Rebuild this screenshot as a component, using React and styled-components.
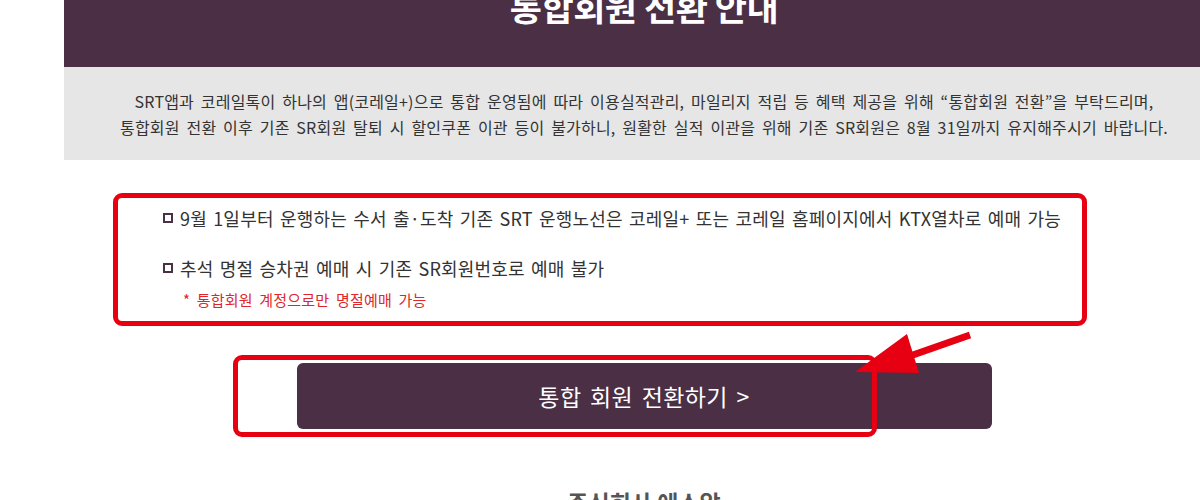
import React from 'react';
import styled, { createGlobalStyle } from 'styled-components';

const GlobalStyle = createGlobalStyle`
  html, body {
    margin: 0;
    padding: 0;
    background: #fff;
    overflow: hidden;
  }
  body {
    font-family: "Noto Sans CJK KR", "Noto Sans", sans-serif;
    color: #333;
  }
`;

const Page = styled.div`
  position: relative;
  width: 1200px;
  height: 500px;
  overflow: hidden;
`;

const Container = styled.div`
  margin-left: 64px;
  width: 1160px;
`;

const Header = styled.div`
  height: 67px;
  background: #4a2f45;
  display: flex;
  justify-content: center;
  overflow: hidden;
`;

const Title = styled.h1`
  margin: -13px 0 0;
  font-size: 35px;
  line-height: 38px;
  font-weight: 700;
  color: #fff;
  letter-spacing: -0.5px;
`;

const Intro = styled.div`
  background: #e6e6e6;
  height: 93px;
  display: flex;
  flex-direction: column;
  justify-content: center;
  align-items: center;
  font-size: 16px;
  line-height: 26px;
  letter-spacing: 0.2px;
  word-spacing: 3px;
  color: #333;
  text-align: center;
`;

const Notice = styled.ul`
  list-style: none;
  margin: 0;
  padding: 45px 0 0 99px;
`;

const Item = styled.li`
  display: flex;
  align-items: center;
  gap: 7px;
  font-size: 18px;
  line-height: 26px;
  letter-spacing: 0.2px;
  word-spacing: 2px;
  color: #333;
  & + & {
    margin-top: 24px;
  }
`;

const Square = styled.span`
  width: 10px;
  height: 10px;
  box-sizing: border-box;
  border: 2px solid #4a2f45;
  flex-shrink: 0;
`;

const Note = styled.p`
  margin: 8px 0 0 119px;
  font-size: 15px;
  line-height: 22px;
  letter-spacing: 0.2px;
  word-spacing: 3px;
  color: #e0262d;
`;

const ButtonRow = styled.div`
  display: flex;
  justify-content: center;
  margin-top: 52px;
`;

const ConvertButton = styled.button`
  width: 695px;
  height: 66px;
  border: 0;
  border-radius: 6px;
  background: #4a2f45;
  color: #fff;
  font-family: inherit;
  font-size: 23px;
  letter-spacing: 0.4px;
  word-spacing: 3px;
  cursor: pointer;
`;

const Company = styled.div`
  margin-top: 57px;
  text-align: center;
  font-size: 23px;
  font-weight: 700;
  line-height: 32px;
  color: #555;
`;

const Mark = styled.div`
  position: absolute;
  left: ${(p) => p.$x}px;
  top: ${(p) => p.$y}px;
  width: ${(p) => p.$w}px;
  height: ${(p) => p.$h}px;
  box-sizing: border-box;
  border: 5px solid #e60012;
  border-radius: 9px;
  pointer-events: none;
`;

const Arrow = styled.svg`
  position: absolute;
  left: 840px;
  top: 320px;
  pointer-events: none;
`;

export default function App() {
  return (
    <Page>
      <GlobalStyle />
      <Container>
        <Header>
          <Title>통합회원 전환 안내</Title>
        </Header>
        <Intro>
          <div>SRT앱과 코레일톡이 하나의 앱(코레일+)으로 통합 운영됨에 따라 이용실적관리, 마일리지 적립 등 혜택 제공을 위해 “통합회원 전환”을 부탁드리며,</div>
          <div>통합회원 전환 이후 기존 SR회원 탈퇴 시 할인쿠폰 이관 등이 불가하니, 원활한 실적 이관을 위해 기존 SR회원은 8월 31일까지 유지해주시기 바랍니다.</div>
        </Intro>
        <Notice>
          <Item><Square />9월 1일부터 운행하는 수서 출·도착 기존 SRT 운행노선은 코레일+ 또는 코레일 홈페이지에서 KTX열차로 예매 가능</Item>
          <Item><Square />추석 명절 승차권 예매 시 기존 SR회원번호로 예매 불가</Item>
        </Notice>
        <Note>* 통합회원 계정으로만 명절예매 가능</Note>
        <ButtonRow>
          <ConvertButton>통합 회원 전환하기 &gt;</ConvertButton>
        </ButtonRow>
        <Company>주식회사 에스알</Company>
      </Container>

      <Mark $x={113} $y={193} $w={974} $h={133} />
      <Mark $x={233} $y={355} $w={644} $h={82} />
      <Arrow width="140" height="60" viewBox="0 0 140 60">
        <line x1="130" y1="15" x2="70" y2="36" stroke="#e60012" strokeWidth="7" />
        <polygon points="15,52 67,14 79,53" fill="#e60012" />
      </Arrow>
    </Page>
  );
}
